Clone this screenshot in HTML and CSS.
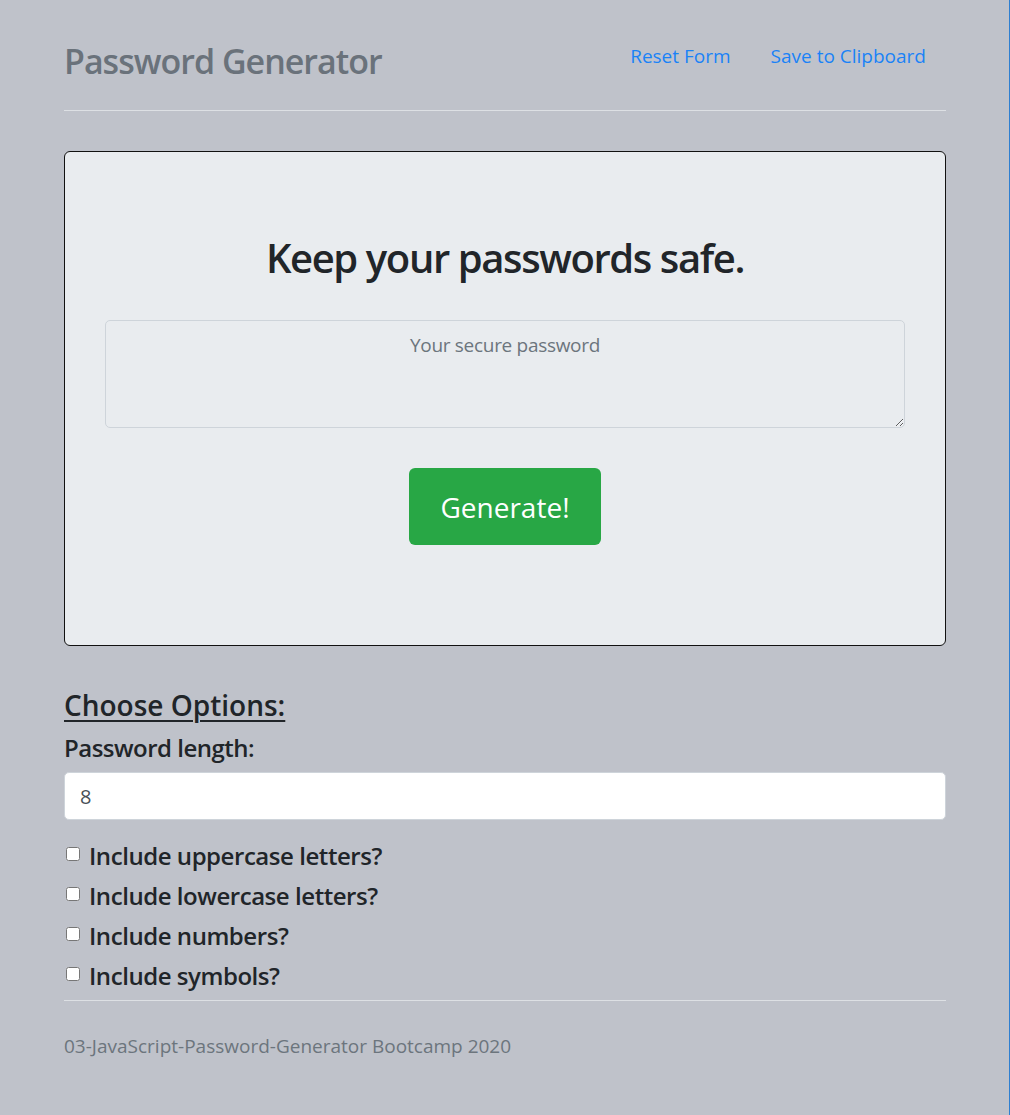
FILE: index.html
```html
<!DOCTYPE html>
<html lang="en">
<head>
<meta charset="utf-8">
<title>Password Generator</title>
<link rel="stylesheet" href="styles.css">
</head>
<body>
<div class="page">
  <div class="container">
    <header class="header">
      <h1 class="brand">Password Generator</h1>
      <nav class="nav">
        <a class="nav-link" href="#">Reset Form</a>
        <a class="nav-link" href="#">Save to Clipboard</a>
      </nav>
    </header>

    <section class="jumbotron">
      <h2 class="lead-title">Keep your passwords safe.</h2>
      <textarea class="password-box" placeholder="Your secure password"></textarea>
      <div class="btn-row">
        <button class="btn-generate" type="button">Generate!</button>
      </div>
    </section>

    <section class="options">
      <h3 class="options-title">Choose Options:</h3>
      <label class="length-label" for="len">Password length:</label>
      <input class="length-input" id="len" type="text" value="8">
      <div class="check-row"><input type="checkbox" class="check" id="c1"><label for="c1">Include uppercase letters?</label></div>
      <div class="check-row"><input type="checkbox" class="check" id="c2"><label for="c2">Include lowercase letters?</label></div>
      <div class="check-row"><input type="checkbox" class="check" id="c3"><label for="c3">Include numbers?</label></div>
      <div class="check-row"><input type="checkbox" class="check" id="c4"><label for="c4">Include symbols?</label></div>
    </section>

    <footer class="footer">03-JavaScript-Password-Generator Bootcamp 2020</footer>
  </div>
</div>
</body>
</html>
```

FILE: styles.css
```css
* { box-sizing: border-box; }

html, body {
  margin: 0;
  padding: 0;
  background: #bfc2ca;
}

body {
  font-family: "Open Sans", "Noto Sans", sans-serif;
  color: #212529;
}

.page {
  width: 1010px;
  min-height: 1115px;
  border-right: 1px solid #2e7fd1;
}

.container {
  width: 882px;
  margin-left: 64px;
}

.header {
  display: flex;
  justify-content: space-between;
  align-items: flex-start;
  padding-top: 39px;
  height: 111px;
  border-bottom: 1px solid #dde0e4;
}

.brand {
  margin: 0;
  font-size: 34px;
  line-height: 44px;
  font-weight: 600;
  letter-spacing: -1px;
  color: #6a727b;
}

.nav {
  display: flex;
  margin-top: 2px;
}

.nav-link {
  display: block;
  padding: 0 20px;
  font-size: 19px;
  line-height: 30px;
  color: #1a82f7;
  text-decoration: none;
}

.jumbotron {
  margin-top: 40px;
  height: 495px;
  background: #e9ecef;
  border: 1px solid #111;
  border-radius: 6px;
  padding: 82px 40px 0;
  display: flex;
  flex-direction: column;
  align-items: center;
}

.lead-title {
  margin: 0;
  font-size: 40px;
  line-height: 48px;
  font-weight: 600;
  letter-spacing: -1.4px;
  color: #212529;
  text-align: center;
}

.password-box {
  display: block;
  margin-top: 38px;
  width: 800px;
  height: 108px;
  padding: 9px 15px;
  background: transparent;
  border: 1px solid #ced4da;
  border-radius: 5px;
  font-family: inherit;
  font-size: 19px;
  line-height: 30px;
  letter-spacing: -0.3px;
  text-align: center;
  color: #495057;
}

.password-box::placeholder {
  color: #6c757d;
}

.btn-row {
  margin-top: 40px;
}

.btn-generate {
  width: 192px;
  height: 77px;
  border: 0;
  border-radius: 6px;
  background: #28a745;
  color: #fff;
  font-family: inherit;
  font-size: 28px;
}

.options {
  display: flex;
  flex-direction: column;
}

.options-title {
  margin: 42px 0 0;
  font-size: 28px;
  line-height: 34px;
  font-weight: 600;
  text-decoration: underline;
  text-underline-offset: 4px;
  text-decoration-thickness: 2px;
}

.length-label {
  margin-top: 8px;
  font-size: 24px;
  line-height: 36px;
  font-weight: 600;
  letter-spacing: -0.5px;
}

.length-input {
  margin-top: 6px;
  height: 48px;
  width: 100%;
  padding: 0 15px;
  background: #fff;
  border: 1px solid #ced4da;
  border-radius: 5px;
  font-family: inherit;
  font-size: 20px;
  color: #495057;
}

.check-row {
  display: flex;
  align-items: flex-start;
  height: 40px;
  font-size: 24px;
  line-height: 40px;
  font-weight: 600;
  letter-spacing: -0.45px;
}

.length-input + .check-row {
  margin-top: 16px;
}

.check {
  width: 14px;
  height: 14px;
  margin: 11px 9px 0 2px;
}

.footer {
  margin-top: 4px;
  border-top: 1px solid #dde0e4;
  padding-top: 30px;
  font-size: 19px;
  line-height: 30px;
  color: #6c757d;
}
```
